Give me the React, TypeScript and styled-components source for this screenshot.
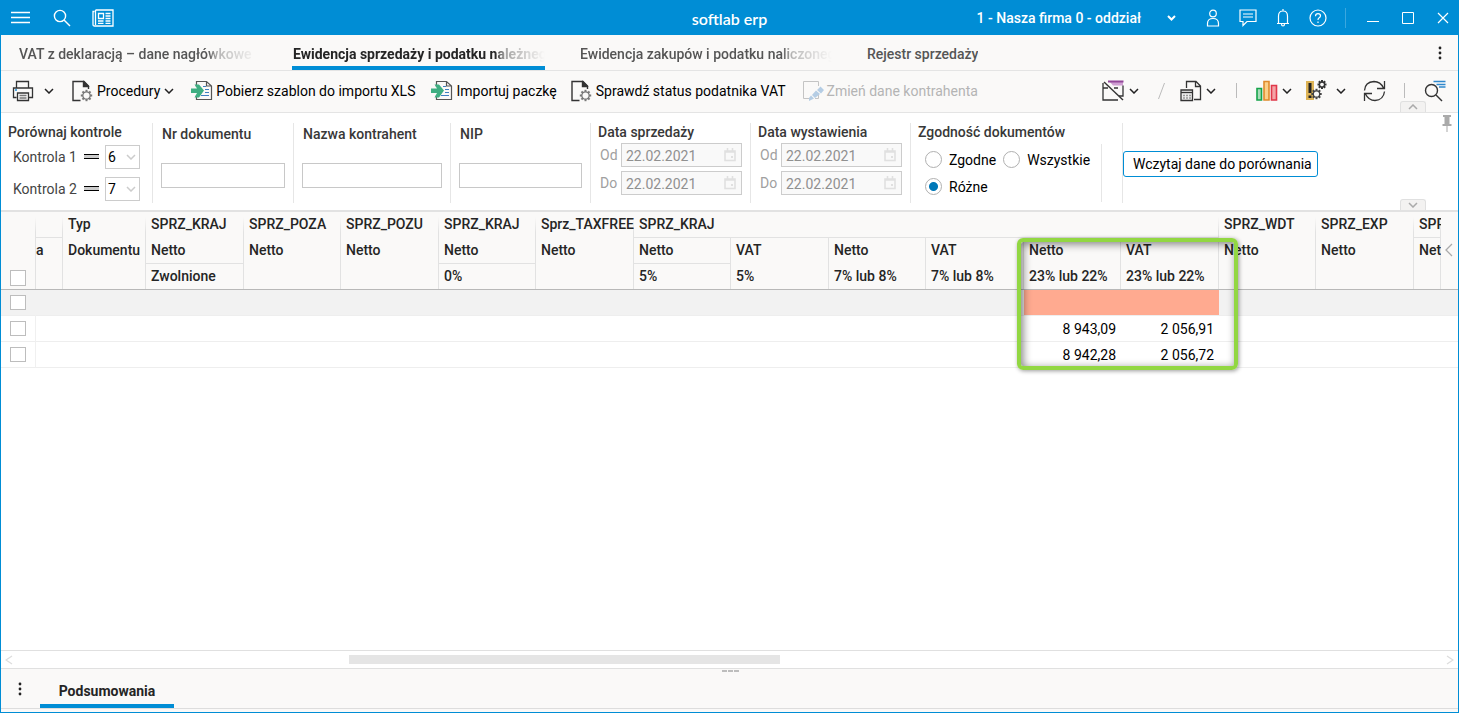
import React from "react";
import styled, { createGlobalStyle, css } from "styled-components";

const blue = "#008dd5";
const panel = "#faf9f8";

const GlobalStyle = createGlobalStyle`
  *, *::before, *::after { box-sizing: border-box; }
  body { margin: 0; background: #fff; }
  body, button, input, select { font: 400 14px/18px Roboto, "Liberation Sans", sans-serif; }
  button { cursor: pointer; }
`;

const Shell = styled.div`
  display: flex;
  flex-direction: column;
  min-height: 100vh;
  border: solid ${blue};
  border-width: 0 1px 1px;
  color: #000;
`;

/* ---------- title bar ---------- */

const TitleBar = styled.header`
  display: grid;
  grid-template-columns: 1fr auto 1fr;
  align-items: center;
  height: 35px;
  background: ${blue};
  color: #fff;
`;
const TitleLeft = styled.div`
  display: flex;
  align-items: center;
  gap: 17px;
  padding-left: 8px;
`;
const Brand = styled.div`
  padding-top: 3px;
  font: 600 16px/20px Lato, "Open Sans", sans-serif;
`;
const TitleRight = styled.div`
  display: flex;
  align-items: center;
  justify-content: flex-end;
  gap: 11px;
  padding-right: 3px;
`;
const IconButton = styled.button`
  display: flex;
  align-items: center;
  justify-content: center;
  min-width: 24px;
  height: 24px;
  padding: 0;
  border: 0;
  background: none;
  color: inherit;
`;
const CompanyButton = styled.button`
  display: flex;
  align-items: center;
  gap: 26px;
  margin-right: 14px;
  padding: 0;
  border: 0;
  background: none;
  color: #fff;
  font-weight: 500;
`;
const TitleDivider = styled.span`
  width: 1px;
  height: 20px;
  margin: 0 4px;
  background: #3ba7df;
`;

/* ---------- tabs ---------- */

const TabBar = styled.nav`
  display: flex;
  gap: 34px;
  height: 36px;
  padding: 0 6px 0 17px;
  background: ${panel};
  border-bottom: 1px solid #e4e4e4;
`;
const Tab = styled.button<{ $width?: number; $active?: boolean; $faded?: boolean }>`
  flex: none;
  width: ${(p) => (p.$width ? `${p.$width}px` : "auto")};
  height: 35px;
  padding: 6px 0 0 1px;
  border: 0;
  border-bottom: 4px solid ${(p) => (p.$active ? blue : "transparent")};
  background: none;
  color: ${(p) => (p.$active ? "#252525" : "#555")};
  font-weight: ${(p) => (p.$active ? 700 : 500)};
  text-align: left;
  white-space: nowrap;
  overflow: hidden;
  span {
    display: block;
    overflow: hidden;
    ${(p) =>
      p.$faded &&
      css`
        mask-image: linear-gradient(to left, transparent, rgba(0, 0, 0, 0.4) 40px, #000 50px);
      `}
  }
`;
const Spacer = styled.div`
  flex: 1;
`;
const CenteredIcon = styled(IconButton)`
  align-self: center;
`;

/* ---------- toolbar ---------- */

const Toolbar = styled.div`
  position: relative;
  display: flex;
  align-items: center;
  height: 42px;
  padding: 0 12px 2px 11px;
  background: ${panel};
  border-bottom: 1px solid #e4e4e4;
`;
const ToolButton = styled.button<{ $gap?: number; $after?: number }>`
  display: flex;
  align-items: center;
  gap: ${(p) => p.$gap ?? 4}px;
  height: 30px;
  margin-right: ${(p) => p.$after ?? 0}px;
  padding: 0;
  border: 0;
  background: none;
  color: #000;
  white-space: nowrap;
  &:disabled {
    color: #b4b4b4;
    cursor: default;
  }
`;
const SlashMark = styled.span`
  display: flex;
  margin-right: 15px;
`;
const ToolDivider = styled.span`
  width: 1px;
  height: 15px;
  margin-right: 19px;
  background: #bbb;
`;
const Handle = styled.button`
  position: absolute;
  right: 32px;
  bottom: 0;
  display: flex;
  align-items: center;
  justify-content: center;
  width: 26px;
  height: 11px;
  padding: 0;
  border: 1px solid #e0e0e0;
  border-bottom: 0;
  border-radius: 3px 3px 0 0;
  background: #f3f2f1;
  z-index: 1;
`;

/* ---------- filters ---------- */

const Filters = styled.section`
  position: relative;
  display: flex;
  height: 99px;
  padding-top: 10px;
  background: #fff;
  border-bottom: 2px solid #e2e2e2;
`;
const Group = styled.div<{ $width: number; $drop?: number }>`
  flex: none;
  width: ${(p) => p.$width}px;
  height: 80px;
  padding: ${(p) => p.$drop ?? 0}px 0 0 7px;
  border-right: 1px solid #e6e6e6;
`;
const GroupTitle = styled.div`
  color: #383838;
  font-weight: 500;
  line-height: 18px;
  label {
    padding-left: 2px;
  }
`;
const ControlRow = styled.div`
  display: flex;
  align-items: center;
  height: 24px;
  margin: 4px 12px 8px 5px;
  color: #444;
  label {
    flex: 1;
  }
`;
const SelectBox = styled.div`
  position: relative;
  width: 35px;
  margin-left: 6px;
  select {
    display: block;
    width: 100%;
    height: 24px;
    padding: 0 2px;
    border: 1px solid #ccc;
    border-radius: 0;
    background: #fff;
    color: #000;
    appearance: none;
  }
  svg {
    position: absolute;
    right: 4px;
    top: 9px;
    pointer-events: none;
  }
`;
const TextField = styled.input`
  display: block;
  width: calc(100% - 9px);
  height: 25px;
  margin: 20px 0 0 1px;
  padding: 0 6px;
  border: 1px solid #c8c8c8;
`;
const DateRow = styled.div`
  display: flex;
  align-items: center;
  margin: 2px 8px 4px 2px;
  color: #a0a0a0;
  label {
    flex: none;
    width: 21px;
  }
`;
const DateBox = styled.div`
  display: flex;
  flex: 1;
  align-items: center;
  min-width: 0;
  height: 24px;
  padding: 0 5px 0 4px;
  border: 1px solid #ccc;
  background: #f9f9f9;
  input {
    flex: 1;
    width: 100%;
    min-width: 0;
    padding: 2px 0 0;
    border: 0;
    background: none;
    color: #909090;
  }
  svg {
    flex: none;
  }
`;
const RadioBody = styled.div`
  display: flex;
  flex-wrap: wrap;
  align-content: flex-start;
  gap: 8px 7px;
  height: 58px;
  margin: 3px 20px 0 0;
  padding: 6px 0 0 7px;
  border-right: 1px solid #e6e6e6;
`;
const Radio = styled.label`
  display: flex;
  align-items: center;
  gap: 7px;
  height: 19px;
  input {
    width: 17px;
    height: 17px;
    margin: 0;
    border: 1px solid #b0b0b0;
    border-radius: 50%;
    background: #fff;
    appearance: none;
  }
  input:checked {
    background: radial-gradient(circle, #0078b8 4px, #fff 5px);
  }
`;
const LoadButton = styled.button`
  width: 195px;
  height: 26px;
  margin-top: 28px;
  padding: 0 5px 0 9px;
  border: 1px solid ${blue};
  border-radius: 3px;
  background: #fff;
  color: #000;
  text-align: left;
  white-space: nowrap;
  span {
    display: block;
    overflow: hidden;
  }
`;
const Pin = styled(IconButton)`
  position: absolute;
  top: 0;
  right: 0;
  min-width: 22px;
  height: 20px;
`;

/* ---------- data table ---------- */

const TableArea = styled.main`
  flex: 1;
  overflow: hidden;
`;
const Table = styled.table`
  width: 100%;
  table-layout: fixed;
  border-spacing: 0;
  th,
  td {
    height: 26px;
    padding: 0;
  }
`;
const HeadCell = styled.th<{ $line?: boolean; $fade?: boolean }>`
  position: relative;
  background: ${(p) =>
    `linear-gradient(to bottom, ${p.$fade ? `${panel} 5px, #e2e2e2 20px` : "#e2e2e2, #e2e2e2"}) right / 1px 100% no-repeat ${panel}`};
  border-bottom: 1px solid ${(p) => (p.$line ? "#e2e2e2" : "#b8b8b8")};
  color: #252525;
  font-weight: 500;
  text-align: left;
  vertical-align: top;
`;
const HeadText = styled.div<{ $flush?: boolean }>`
  height: 25px;
  margin-bottom: 1px;
  padding-left: ${(p) => (p.$flush ? 0 : 5)}px;
  line-height: 24px;
  white-space: nowrap;
  overflow: hidden;
  &:last-of-type {
    margin-bottom: 0;
  }
`;
const CheckHead = styled(HeadCell)`
  vertical-align: bottom;
`;
const GutterHead = styled(HeadCell)`
  background: ${panel};
`;
const GutterButton = styled(IconButton)`
  min-width: 16px;
  margin-top: 26px;
`;
const Check = styled.input`
  display: block;
  width: 16px;
  height: 15px;
  margin: 0 0 0 9px;
  border: 1px solid #bdbdbd;
  background: #fff;
  appearance: none;
  ${CheckHead} & {
    height: 16px;
    margin-bottom: 3px;
  }
`;
const BodyRow = styled.tr<{ $selected?: boolean }>`
  background: ${(p) => (p.$selected ? "#f2f2f2" : "#fff")};
  td {
    border-bottom: 1px solid #eee;
  }
  td:first-child {
    border-right: 1px solid ${(p) => (p.$selected ? "#f2f2f2" : "#f0f0f0")};
  }
`;
const NumberCell = styled.td<{ $alert?: boolean }>`
  && {
    padding-right: 5px;
  }
  background: ${(p) => (p.$alert ? "#ffaa90" : "transparent")};
  text-align: right;
`;
const Highlight = styled.span`
  position: absolute;
  z-index: 1;
  top: 0;
  left: -7px;
  width: 221px;
  height: 132px;
  border: 4px solid #92d742;
  border-radius: 6px;
  box-shadow:
    1px 1px 4px rgba(0, 0, 0, 0.4),
    inset 2px 2px 8px rgba(0, 0, 0, 0.5);
  pointer-events: none;
`;

/* ---------- bottom ---------- */

const ScrollRow = styled.div`
  display: flex;
  align-items: center;
  height: 19px;
  border: solid #e0e0e0;
  border-width: 1px 0;
  ${IconButton} {
    min-width: 16px;
    height: 16px;
  }
`;
const Track = styled.div`
  display: grid;
  flex: 1;
  grid-template-columns: 332fr 431fr 662fr;
  height: 9px;
`;
const Thumb = styled.div`
  grid-column: 2;
  background: #e5e5e5;
`;
const Footer = styled.footer`
  position: relative;
  height: 43px;
  background: ${panel};
`;
const FooterTabs = styled.div`
  display: flex;
  height: 40px;
  padding-left: 7px;
  gap: 8px;
  border-bottom: 1px solid #ddd;
`;
const FooterTab = styled.button`
  width: 134px;
  height: 39px;
  padding: 8px 0 0;
  border: 0;
  border-bottom: 4px solid ${blue};
  background: none;
  color: #252525;
  font-weight: 700;
`;
const Grip = styled.div`
  position: absolute;
  top: 1px;
  left: 50%;
  display: flex;
  gap: 1px;
  margin-left: -8px;
  i {
    width: 5px;
    height: 2px;
    background: #bdbdbd;
  }
`;

/* ---------- icons ---------- */

type SvgProps = { w: number; h: number; color?: string; sw?: number; children: React.ReactNode };
const Svg = ({ w, h, color = "currentColor", sw = 1, children }: SvgProps) => (
  <svg width={w} height={h} viewBox={`0 0 ${w} ${h}`} fill="none" stroke={color} strokeWidth={sw} aria-hidden="true">
    {children}
  </svg>
);

const Chevron = ({ color = "#222", up = false, sw = 1.5 }) => (
  <Svg w={10} h={6} color={color} sw={sw}>
    <path d={up ? "M1 5l4-4 4 4" : "M1 1l4 4 4-4"} />
  </Svg>
);
const SideChevron = ({ color = "#aaa", left = true, sw = 1.3, h = 14 }) => (
  <Svg w={8} h={h} color={color} sw={sw}>
    <path d={left ? `M7 1L1 ${h / 2}l6 ${h / 2 - 1}` : `M1 1l6 ${h / 2 - 1}-6 ${h / 2 - 1}`} />
  </Svg>
);
const MenuIcon = () => (
  <Svg w={20} h={13} sw={1.3}>
    <path d="M0 1.5h19M0 6.5h19M0 11.5h19" />
  </Svg>
);
const SearchIcon = () => (
  <Svg w={18} h={18} sw={1.4}>
    <circle cx="7" cy="7" r="5.600" />
    <path d="M11 11l6 6" />
  </Svg>
);
const NewsIcon = () => (
  <Svg w={22} h={18} sw={1.3}>
    <path d="M3.500 1H21v16H2.500Q1 17 1 15.500V2.500h1.500M3.500 1v15" />
    <path d="M6.500 4.500h5v5h-5zM13.500 4.500h5M13.500 7h5M13.500 9.500h5M6 12h5.500M13.500 12h5M6 14.300h5.500M13.500 14.300h5" />
  </Svg>
);
const UserIcon = () => (
  <Svg w={14} h={18} sw={1.2}>
    <circle cx="7" cy="4.500" r="3.300" />
    <path d="M1.500 17v-2.500q0-5 5.500-5t5.500 5V17z" />
  </Svg>
);
const MessageIcon = () => (
  <Svg w={18} h={18} sw={1.2}>
    <path d="M1 1h16v11.500H8L4 16.500v-4H1z M4 5h10M4 8h10" />
  </Svg>
);
const BellIcon = () => (
  <Svg w={14} h={18} sw={1.2}>
    <path d="M7 0v2M1 14.500h12M2.500 14.500V7q0-5 4.500-5t4.500 5v7.500M5.500 15q0 2 1.500 2t1.500-2" />
  </Svg>
);
const HelpIcon = () => (
  <Svg w={18} h={18} sw={1.2}>
    <circle cx="9" cy="9" r="8" />
    <path d="M6.500 7.200q0-2.600 2.500-2.600t2.500 2.200q0 1.200-1.300 2T9 11M9 12.500V14" />
  </Svg>
);
const DotsIcon = () => (
  <Svg w={4} h={14}>
    <g fill="#222" stroke="none">
      <circle cx="2" cy="2" r="1.400" />
      <circle cx="2" cy="7" r="1.400" />
      <circle cx="2" cy="12" r="1.400" />
    </g>
  </Svg>
);
const PrinterIcon = () => (
  <Svg w={22} h={22} color="#333" sw={1.3}>
    <path d="M4.500 8V1.500h12V8M4.500 17.500h-3v-9.500h19v9.500h-3.500M5.500 13h11v7.500h-11z" />
    <path d="M7.500 15.500h7M7.500 18h7" stroke="#777" />
    <path d="M3 10h2" stroke="#1a8ad4" />
  </Svg>
);
const Cog = ({ x, y, r, color = "#777" }: { x: number; y: number; r: number; color?: string }) => (
  <g transform={`translate(${x} ${y})`} stroke={color}>
    <circle r={r} strokeWidth="1.300" />
    {[0, 45, 90, 135, 180, 225, 270, 315].map((a) => (
      <path key={a} d={`M${r} 0h2`} strokeWidth="2" transform={`rotate(${a})`} />
    ))}
  </g>
);
const DocGearIcon = () => (
  <Svg w={21} h={22} color="#333" sw={1.4}>
    <path d="M8.500 20.500H1V1.500h11L16.500 6v3M11.500 1.500v5h5" />
    <path d="M12 2l4 4h-4z" fill="#333" />
    <Cog x={14.5} y={15.5} r={3.7} />
  </Svg>
);
const ImportIcon = () => (
  <Svg w={22} h={21} color="#555" sw={1.2}>
    <path d="M5.500 7V1.500h10l5 4.500v13.500h-15V15M15.500 1.500V6h5" />
    <path d="M12 6.500h3M14 9.500h4M14 12.500h4M10 15.500h8" stroke="#3f7fc0" />
    <path d="M0 8.500h6L3.500 4.500H8L13 10.500 8 17.500H3.500L6 13H0z" fill="#3fae82" stroke="none" />
  </Svg>
);
const EditDocIcon = () => (
  <Svg w={21} h={21} color="#c4c4c4">
    <path d="M6 18.500H.5V1.500h15V6M12 18.500h3.500V13" />
    <path d="M17.500 6.500L21 10l-3 3.500-4-3.500zM13 10.500l4 3.500-5 4-3-3zM8 15.500l3 3-5 2.500v-3z" fill="#b5cde4" stroke="none" />
  </Svg>
);
const FilterOffIcon = () => (
  <Svg w={23} h={22} color="#333" sw={1.3}>
    <path d="M7 1h14v4.500H11z" fill="#cf9fd2" stroke="none" />
    <path d="M6 1.500h15.500" stroke="#93479a" strokeWidth="2" />
    <path d="M1 3v17h15M21 5.500V16h-4M1 8h5M12 8h4" />
    <path d="M2 2l19 18" strokeWidth="1.400" />
  </Svg>
);
const SlashIcon = () => (
  <Svg w={7} h={16} color="#bbb">
    <path d="M6.500 0l-6 16" />
  </Svg>
);
const PreviewIcon = () => (
  <Svg w={22} h={22} color="#333" sw={1.3}>
    <path d="M6.500 8V1.500h9.500L20.500 6v13.500H14M15.500 1.500v5h5" />
    <path d="M1 10h11.500v10.500H1z" fill="#eee" />
    <path d="M1 12.500h11.500" />
    <path d="M3 15.500h2M6 15.500h2M9 15.500h2M3 18h2M6 18h2M9 18h2" stroke="#999" />
  </Svg>
);
const ChartIcon = () => (
  <Svg w={22} h={22} sw={1.6}>
    <path d="M1 8.500h4.500V20H1z" stroke="#16a34a" fill="#a7dcb8" />
    <path d="M8 1.500h5V20H8z" stroke="#e08a2c" fill="#fbd089" />
    <path d="M15.500 5.500h5V20h-5z" stroke="#e0384a" fill="#f4a3a6" />
  </Svg>
);
const WarningGearIcon = () => (
  <Svg w={22} h={22}>
    <path d="M1 1h8v19H1z" fill="#deb456" stroke="none" />
    <path d="M5 3v10M5 15.500V18" stroke="#222" strokeWidth="3" />
    <Cog x={17} y={4.5} r={2.5} color="#333" />
    <Cog x={11.5} y={14} r={3.2} color="#444" />
  </Svg>
);
const RefreshIcon = () => (
  <Svg w={23} h={22} color="#333" sw={1.3}>
    <path d="M1.500 10.500Q2 2 11 1.500q6.500 0 9.500 6.500M21.500 1v7.500H14M21.500 11.500q-1 8.500-9.500 9-6.500 0-9.500-6.500M1.500 21v-7.500H9" />
  </Svg>
);
const FindIcon = () => (
  <Svg w={22} h={22} color="#333" sw={1.4}>
    <circle cx="7.500" cy="10.500" r="6" />
    <path d="M12 15l6 6" />
    <path d="M9.500 1.500h12M12.500 4.500h9M15 7h6.500" stroke="#2f88cc" strokeWidth="1.600" />
  </Svg>
);
const EqualsIcon = () => (
  <Svg w={15} h={6} color="#000">
    <path d="M0 2.500h15" stroke="#ccc" strokeWidth="3" />
    <path d="M0 .5h15M0 4.500h15" />
  </Svg>
);
const CalendarIcon = () => (
  <Svg w={12} h={14} color="#e0e0e0" sw={1.6}>
    <path d="M1 3h10v9.500H1zM3.500 0v3M8.500 0v3M1 4h10" />
    <path d="M7 8h2v2H7z" fill="#e0e0e0" stroke="none" />
  </Svg>
);
const PinIcon = () => (
  <Svg w={10} h={17}>
    <path d="M1 0h8v2H7.500v7H9.500v2h-9V9H2.500V2H1zM4.500 11h1v6h-1z" fill="#aaa" stroke="none" />
  </Svg>
);

/* ---------- data ---------- */

const columnWidths = [35, 27, 83, 98, 97, 98, 97, 98, 97, 98, 97, 98, 97, 98, 97, 98, 27];

const rows = [
  { id: 1, selected: true, net: "", vat: "" },
  { id: 2, selected: false, net: "8 943,09", vat: "2 056,91" },
  { id: 3, selected: false, net: "8 942,28", vat: "2 056,72" },
];

type HeadProps = {
  lines: string[];
  rows?: number;
  cols?: number;
  line?: boolean;
  fade?: boolean;
  flush?: boolean;
  children?: React.ReactNode;
};
const Head = ({ lines, rows: span = 1, cols = 1, line, fade, flush, children }: HeadProps) => (
  <HeadCell rowSpan={span} colSpan={cols} $line={line} $fade={fade}>
    {lines.map((t, i) => (
      <HeadText key={i} $flush={flush}>
        {t}
      </HeadText>
    ))}
    {children}
  </HeadCell>
);

const ControlPick = ({ n, value }: { n: number; value: string }) => (
  <ControlRow>
    <label htmlFor={`control-${n}`}>Kontrola {n}</label>
    <EqualsIcon />
    <SelectBox>
      <select id={`control-${n}`} defaultValue={value}>
        <option>6</option>
        <option>7</option>
      </select>
      <Chevron color="#ccc" />
    </SelectBox>
  </ControlRow>
);

const DateGroup = ({ title, id }: { title: string; id: string }) => (
  <Group $width={160} role="group" aria-label={title}>
    <GroupTitle>{title}</GroupTitle>
    {["Od", "Do"].map((side) => (
      <DateRow key={side}>
        <label htmlFor={`${id}-${side}`}>{side}</label>
        <DateBox>
          <input id={`${id}-${side}`} defaultValue="22.02.2021" disabled />
          <CalendarIcon />
        </DateBox>
      </DateRow>
    ))}
  </Group>
);

const TextFilter = ({ title, id, width }: { title: string; id: string; width: number }) => (
  <Group $width={width} $drop={2}>
    <GroupTitle>
      <label htmlFor={id}>{title}</label>
    </GroupTitle>
    <TextField id={id} />
  </Group>
);

export default function App() {
  return (
    <Shell>
      <GlobalStyle />
      <TitleBar>
        <TitleLeft>
          <IconButton aria-label="Menu"><MenuIcon /></IconButton>
          <IconButton aria-label="Szukaj"><SearchIcon /></IconButton>
          <IconButton aria-label="Aktualności"><NewsIcon /></IconButton>
        </TitleLeft>
        <Brand>softlab erp</Brand>
        <TitleRight>
          <CompanyButton>
            1 - Nasza firma 0 - oddział
            <Svg w={9} h={6} sw={2}><path d="M1 1l3.500 3.500L8 1" /></Svg>
          </CompanyButton>
          <IconButton aria-label="Użytkownik"><UserIcon /></IconButton>
          <IconButton aria-label="Wiadomości"><MessageIcon /></IconButton>
          <IconButton aria-label="Powiadomienia"><BellIcon /></IconButton>
          <IconButton aria-label="Pomoc"><HelpIcon /></IconButton>
          <TitleDivider />
          <IconButton aria-label="Minimalizuj"><Svg w={12} h={12}><path d="M0 9.500h12" /></Svg></IconButton>
          <IconButton aria-label="Maksymalizuj"><Svg w={12} h={12}><path d="M.5.5h11v11H.5z" /></Svg></IconButton>
          <IconButton aria-label="Zamknij"><Svg w={12} h={12} sw={1.2}><path d="M1 1l10 10M11 1L1 11" /></Svg></IconButton>
        </TitleRight>
      </TitleBar>

      <TabBar>
        <Tab $width={240} $faded><span>VAT z deklaracją – dane nagłówkowe</span></Tab>
        <Tab $width={253} $faded $active><span>Ewidencja sprzedaży i podatku należnego</span></Tab>
        <Tab $width={253} $faded><span>Ewidencja zakupów i podatku naliczonego</span></Tab>
        <Tab><span>Rejestr sprzedaży</span></Tab>
        <Spacer />
        <CenteredIcon aria-label="Więcej"><DotsIcon /></CenteredIcon>
      </TabBar>

      <Toolbar>
        <ToolButton $gap={10} $after={18} aria-label="Drukuj"><PrinterIcon /><Chevron /></ToolButton>
        <ToolButton $after={17}><DocGearIcon />Procedury<Chevron /></ToolButton>
        <ToolButton $gap={3} $after={16}><ImportIcon />Pobierz szablon do importu XLS</ToolButton>
        <ToolButton $gap={3} $after={14}><ImportIcon />Importuj paczkę</ToolButton>
        <ToolButton $after={17}><DocGearIcon />Sprawdź status podatnika VAT</ToolButton>
        <ToolButton $gap={3} disabled><EditDocIcon />Zmień dane kontrahenta</ToolButton>
        <Spacer />
        <ToolButton $after={19} aria-label="Filtr"><FilterOffIcon /><Chevron /></ToolButton>
        <SlashMark><SlashIcon /></SlashMark>
        <ToolButton $after={20} aria-label="Podgląd"><PreviewIcon /><Chevron /></ToolButton>
        <ToolDivider />
        <ToolButton $after={13} aria-label="Wykres"><ChartIcon /><Chevron /></ToolButton>
        <ToolButton $gap={9} $after={17} aria-label="Ostrzeżenia"><WarningGearIcon /><Chevron /></ToolButton>
        <ToolButton $after={18} aria-label="Odśwież"><RefreshIcon /></ToolButton>
        <ToolDivider />
        <ToolButton aria-label="Znajdź"><FindIcon /></ToolButton>
        <Handle aria-label="Zwiń"><Chevron up color="#aaa" /></Handle>
      </Toolbar>

      <Filters>
        <Group $width={152} role="group" aria-label="Porównaj kontrole">
          <GroupTitle>Porównaj kontrole</GroupTitle>
          <ControlPick n={1} value="6" />
          <ControlPick n={2} value="7" />
        </Group>
        <TextFilter title="Nr dokumentu" id="doc-no" width={141} />
        <TextFilter title="Nazwa kontrahent" id="partner" width={157} />
        <TextFilter title="NIP" id="nip" width={140} />
        <DateGroup title="Data sprzedaży" id="sale" />
        <DateGroup title="Data wystawienia" id="issue" />
        <Group $width={212} role="radiogroup" aria-label="Zgodność dokumentów">
          <GroupTitle>Zgodność dokumentów</GroupTitle>
          <RadioBody>
            <Radio><input type="radio" name="match" />Zgodne</Radio>
            <Radio><input type="radio" name="match" />Wszystkie</Radio>
            <Radio><input type="radio" name="match" defaultChecked />Różne</Radio>
          </RadioBody>
        </Group>
        <LoadButton><span>Wczytaj dane do porównania</span></LoadButton>
        <Pin aria-label="Przypnij"><PinIcon /></Pin>
        <Handle aria-label="Rozwiń"><Chevron color="#aaa" /></Handle>
      </Filters>

      <TableArea>
        <Table>
          <colgroup>
            {columnWidths.map((w, i) => (
              <col key={i} width={w} />
            ))}
            <col />
          </colgroup>
          <thead>
            <tr>
              <CheckHead rowSpan={3} $fade><Check type="checkbox" aria-label="Zaznacz wszystko" /></CheckHead>
              <Head lines={[""]} line fade />
              <Head lines={["Typ", "Dokumentu"]} rows={3} fade />
              <Head lines={["SPRZ_KRAJ", "Netto"]} rows={2} line fade />
              <Head lines={["SPRZ_POZA", "Netto"]} rows={3} fade />
              <Head lines={["SPRZ_POZU", "Netto"]} rows={3} fade />
              <Head lines={["SPRZ_KRAJ", "Netto"]} rows={2} line fade />
              <Head lines={["Sprz_TAXFREE", "Netto"]} rows={3} fade />
              <Head lines={["SPRZ_KRAJ"]} cols={6} line fade />
              <Head lines={["SPRZ_WDT", "Netto"]} rows={3} fade />
              <Head lines={["SPRZ_EXP", "Netto"]} rows={3} fade />
              <Head lines={["SPRZ_ZW"]} line fade />
              <GutterHead rowSpan={3}>
                <GutterButton aria-label="Pokaż panel"><SideChevron /></GutterButton>
              </GutterHead>
            </tr>
            <tr>
              <Head lines={["a"]} rows={2} flush />
              <Head lines={["Netto"]} line />
              <Head lines={["VAT", "5%"]} rows={2} />
              <Head lines={["Netto", "7% lub 8%"]} rows={2} />
              <Head lines={["VAT", "7% lub 8%"]} rows={2} />
              <Head lines={["Netto", "23% lub 22%"]} rows={2}><Highlight /></Head>
              <Head lines={["VAT", "23% lub 22%"]} rows={2} />
              <Head lines={["Netto"]} rows={2} />
            </tr>
            <tr>
              <Head lines={["Zwolnione"]} />
              <Head lines={["0%"]} />
              <Head lines={["5%"]} />
            </tr>
          </thead>
          <tbody>
            {rows.map((row) => (
              <BodyRow key={row.id} $selected={row.selected}>
                <td><Check type="checkbox" aria-label={`Zaznacz wiersz ${row.id}`} /></td>
                <td colSpan={11} />
                <NumberCell $alert={row.selected}>{row.net}</NumberCell>
                <NumberCell $alert={row.selected}>{row.vat}</NumberCell>
                <td colSpan={4} />
              </BodyRow>
            ))}
          </tbody>
        </Table>
      </TableArea>

      <ScrollRow>
        <IconButton aria-label="Przewiń w lewo"><SideChevron color="#ddd" h={10} /></IconButton>
        <Track><Thumb /></Track>
        <IconButton aria-label="Przewiń w prawo"><SideChevron color="#ddd" h={10} left={false} /></IconButton>
      </ScrollRow>
      <Footer>
        <Grip><i /><i /><i /></Grip>
        <FooterTabs>
          <CenteredIcon aria-label="Więcej"><DotsIcon /></CenteredIcon>
          <FooterTab>Podsumowania</FooterTab>
        </FooterTabs>
      </Footer>
    </Shell>
  );
}
